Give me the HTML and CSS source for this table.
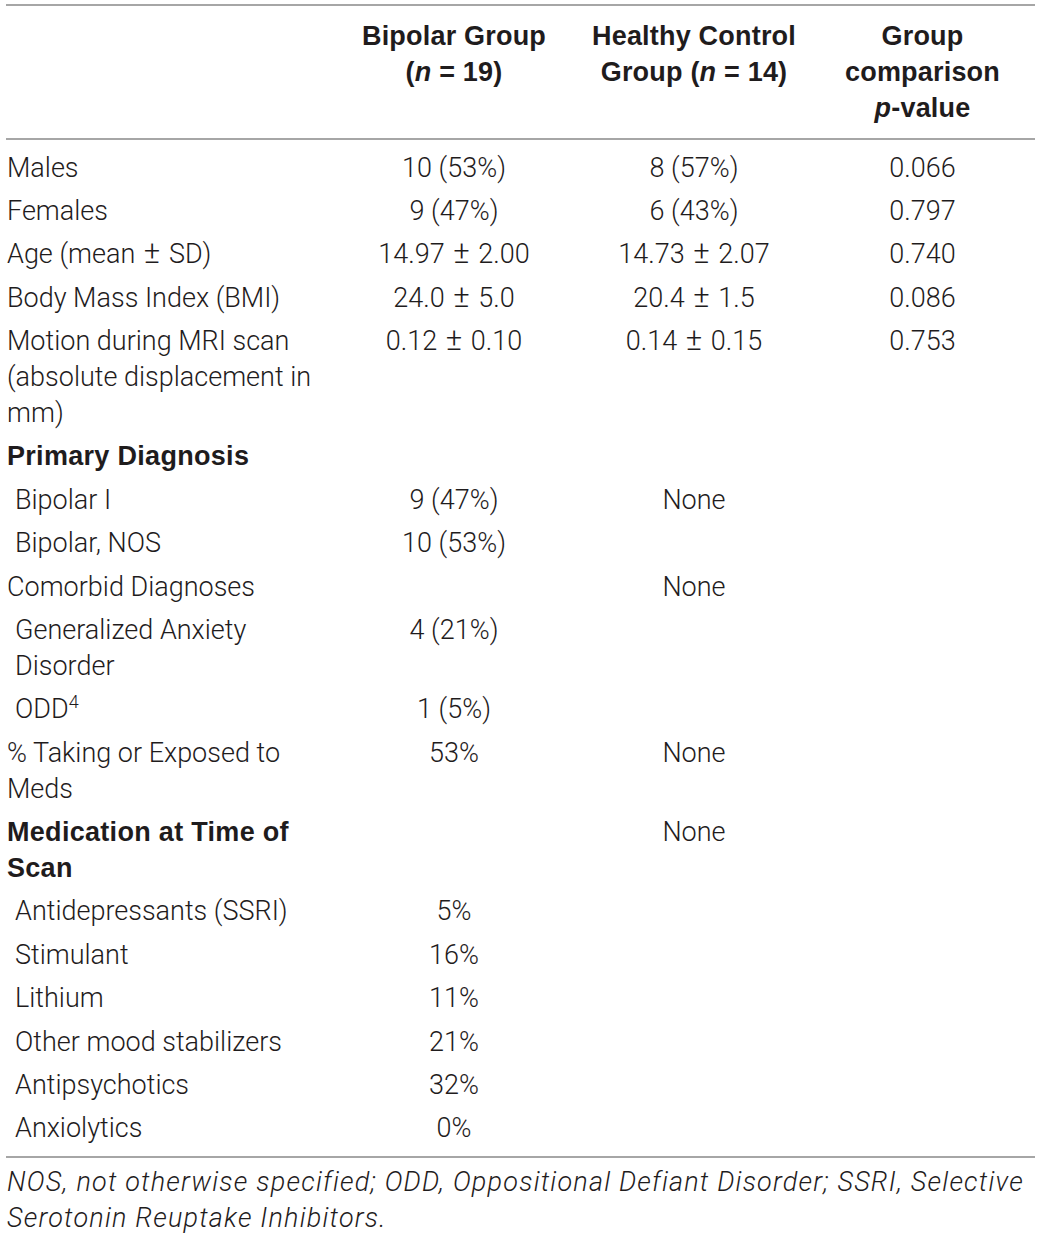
FILE: index.html
```html
<!DOCTYPE html>
<html lang="en">
<head>
<meta charset="utf-8">
<title>Table</title>
<link rel="stylesheet" href="styles.css">
</head>
<body>
<div class="wrap">
<table class="data">
  <colgroup>
    <col class="k1">
    <col class="k2">
    <col class="k3">
    <col class="k4">
  </colgroup>
  <thead>
    <tr>
      <th></th>
      <th>Bipolar Group<br>(<i>n</i> = 19)</th>
      <th>Healthy Control<br>Group (<i>n</i> = 14)</th>
      <th>Group<br>comparison<br><i>p</i>-value</th>
    </tr>
  </thead>
  <tbody>
    <tr class="first"><td>Males</td><td>10 (53%)</td><td>8 (57%)</td><td>0.066</td></tr>
    <tr><td>Females</td><td>9 (47%)</td><td>6 (43%)</td><td>0.797</td></tr>
    <tr><td>Age (mean <span class="pm">±</span> SD)</td><td>14.97 <span class="pm">±</span> 2.00</td><td>14.73 <span class="pm">±</span> 2.07</td><td>0.740</td></tr>
    <tr><td>Body Mass Index (BMI)</td><td>24.0 <span class="pm">±</span> 5.0</td><td>20.4 <span class="pm">±</span> 1.5</td><td>0.086</td></tr>
    <tr><td>Motion during MRI scan (absolute displacement in mm)</td><td>0.12 <span class="pm">±</span> 0.10</td><td>0.14 <span class="pm">±</span> 0.15</td><td>0.753</td></tr>
    <tr><td class="bold">Primary Diagnosis</td><td></td><td></td><td></td></tr>
    <tr><td class="sub">Bipolar I</td><td>9 (47%)</td><td>None</td><td></td></tr>
    <tr><td class="sub">Bipolar, NOS</td><td>10 (53%)</td><td></td><td></td></tr>
    <tr><td>Comorbid Diagnoses</td><td></td><td>None</td><td></td></tr>
    <tr><td class="sub">Generalized Anxiety Disorder</td><td>4 (21%)</td><td></td><td></td></tr>
    <tr><td class="sub">ODD<sup>4</sup></td><td>1 (5%)</td><td></td><td></td></tr>
    <tr><td>% Taking or Exposed to Meds</td><td>53%</td><td>None</td><td></td></tr>
    <tr><td class="bold">Medication at Time of Scan</td><td></td><td>None</td><td></td></tr>
    <tr><td class="sub">Antidepressants (SSRI)</td><td>5%</td><td></td><td></td></tr>
    <tr><td class="sub">Stimulant</td><td>16%</td><td></td><td></td></tr>
    <tr><td class="sub">Lithium</td><td>11%</td><td></td><td></td></tr>
    <tr><td class="sub">Other mood stabilizers</td><td>21%</td><td></td><td></td></tr>
    <tr><td class="sub">Antipsychotics</td><td>32%</td><td></td><td></td></tr>
    <tr class="last"><td class="sub">Anxiolytics</td><td>0%</td><td></td><td></td></tr>
  </tbody>
</table>
<p class="note">NOS, not otherwise specified; ODD, Oppositional Defiant Disorder; SSRI, Selective Serotonin Reuptake Inhibitors.</p>
</div>
</body>
</html>
```

FILE: styles.css
```css
html, body {
  margin: 0;
  padding: 0;
  background: #ffffff;
}

.wrap {
  padding: 4px 5px 0 6px;
  color: #1f1c1d;
  font-family: Roboto, "Liberation Sans", Arial, sans-serif;
  font-weight: 300;
  font-size: 27px;
}

.data {
  width: 1029px;
  border-collapse: collapse;
  table-layout: fixed;
}

.data col.k1 { width: 324px; }
.data col.k2 { width: 248px; }
.data col.k3 { width: 232px; }
.data col.k4 { width: 225px; }

.data th,
.data td {
  box-sizing: border-box;
  vertical-align: top;
  line-height: 36px;
  padding: 3.7px 4px 3.7px 4px;
}

.data thead tr {
  border-top: 2px solid #a6a6a6;
  border-bottom: 2px solid #a6a6a6;
}

.data th {
  font-family: "Liberation Sans", Arial, sans-serif;
  font-weight: 700;
  text-align: center;
  padding-top: 12px;
  padding-bottom: 12px;
  color: #1f1c1d;
  letter-spacing: 0.2px;
}

.data td {
  text-align: center;
}

.data td:first-child {
  text-align: left;
  padding-left: 1px;
}

.data td.sub {
  padding-left: 9px;
}

.data td.bold {
  font-family: "Liberation Sans", Arial, sans-serif;
  font-weight: 700;
  letter-spacing: 0.3px;
}

.data tr.first td { padding-top: 9.5px; }
.data tr.last td { padding-bottom: 10px; }

.data tbody tr.last {
  border-bottom: 2px solid #a6a6a6;
}

.pm {
  font-size: 31px;
  line-height: 0;
  margin: 0 2px;
}

.data sup {
  font-size: 18px;
  line-height: 0;
  vertical-align: 10px;
}

.note {
  margin: 6px 0 0 0;
  padding: 0 0 0 1px;
  font-style: italic;
  line-height: 36px;
  font-size: 27px;
  letter-spacing: 1.2px;
}
```
